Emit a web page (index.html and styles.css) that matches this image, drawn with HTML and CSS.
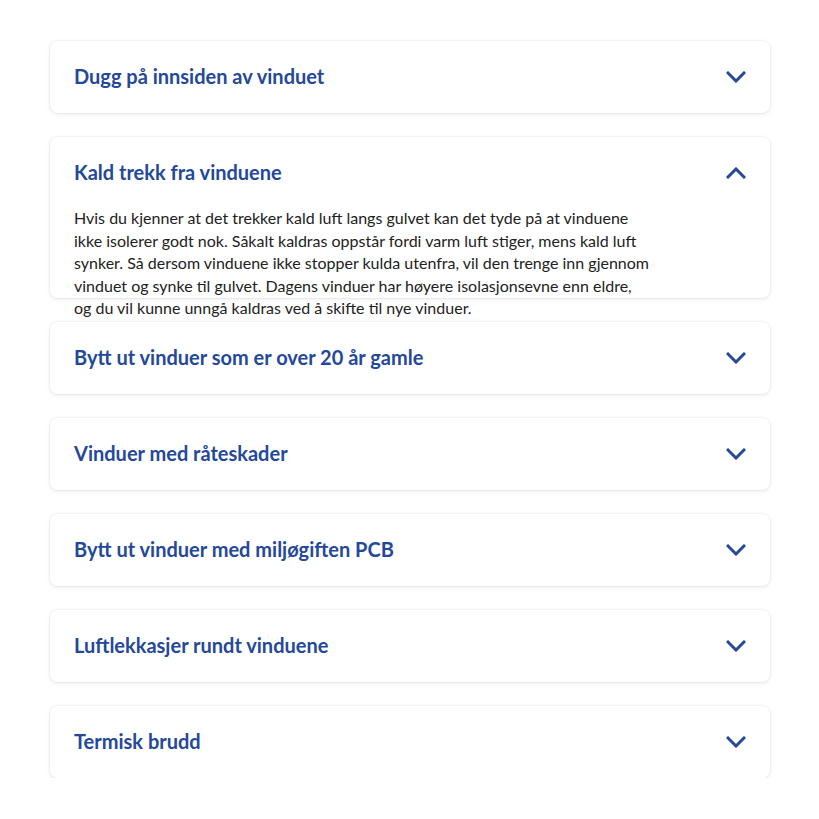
FILE: index.html
```html
<!DOCTYPE html>
<html lang="no">
<head>
<meta charset="utf-8">
<title>FAQ</title>
<link rel="stylesheet" href="styles.css">
</head>
<body>
<main class="faq">
  <section class="card">
    <div class="head"><h3 class="title">Dugg på innsiden av vinduet</h3><svg class="chev" viewBox="0 0 20 12"><path d="M2 2l8 8 8-8"/></svg></div>
  </section>
  <section class="card open">
    <div class="head"><h3 class="title">Kald trekk fra vinduene</h3><svg class="chev" viewBox="0 0 20 12"><path d="M2 10l8-8 8 8"/></svg></div>
    <p class="body">Hvis du kjenner at det trekker kald luft langs gulvet kan det tyde på at vinduene<br>ikke isolerer godt nok. Såkalt kaldras oppstår fordi varm luft stiger, mens kald luft<br>synker. Så dersom vinduene ikke stopper kulda utenfra, vil den trenge inn gjennom<br>vinduet og synke til gulvet. Dagens vinduer har høyere isolasjonsevne enn eldre,<br>og du vil kunne unngå kaldras ved å skifte til nye vinduer.</p>
  </section>
  <section class="card">
    <div class="head"><h3 class="title">Bytt ut vinduer som er over 20 år gamle</h3><svg class="chev" viewBox="0 0 20 12"><path d="M2 2l8 8 8-8"/></svg></div>
  </section>
  <section class="card">
    <div class="head"><h3 class="title">Vinduer med råteskader</h3><svg class="chev" viewBox="0 0 20 12"><path d="M2 2l8 8 8-8"/></svg></div>
  </section>
  <section class="card">
    <div class="head"><h3 class="title">Bytt ut vinduer med miljøgiften PCB</h3><svg class="chev" viewBox="0 0 20 12"><path d="M2 2l8 8 8-8"/></svg></div>
  </section>
  <section class="card">
    <div class="head"><h3 class="title">Luftlekkasjer rundt vinduene</h3><svg class="chev" viewBox="0 0 20 12"><path d="M2 2l8 8 8-8"/></svg></div>
  </section>
  <section class="card">
    <div class="head"><h3 class="title">Termisk brudd</h3><svg class="chev" viewBox="0 0 20 12"><path d="M2 2l8 8 8-8"/></svg></div>
  </section>
</main>
</body>
</html>
```
FILE: styles.css
```css
* { box-sizing: border-box; }
html, body { margin: 0; padding: 0; background: #fff; }
body { font-family: Lato, "Open Sans", sans-serif; color: #222; }
.faq {
  width: 720px;
  margin: 41px 0 0 50px;
  display: flex;
  flex-direction: column;
  gap: 24px;
}
.card {
  background: #fff;
  border-radius: 8px;
  box-shadow: 0 1px 4px rgba(0,0,0,0.10), 0 0 0 1px rgba(0,0,0,0.025);
  height: 72px;
}
.card.open { height: 161px; }
.head {
  height: 70px;
  display: flex;
  align-items: center;
  justify-content: space-between;
  padding: 0 24px;
}
.title {
  margin: 0;
  font-size: 20px;
  font-weight: 700;
  color: #24489a;
}
.chev {
  width: 20px;
  height: 12px;
  margin-top: 1px;
  fill: none;
  stroke: #24489a;
  stroke-width: 3;
  stroke-linecap: square;
}
.body {
  margin: 0;
  padding: 0 24px;
  font-size: 16px;
  line-height: 22.5px;
  color: #222;
  white-space: nowrap;
}
```
